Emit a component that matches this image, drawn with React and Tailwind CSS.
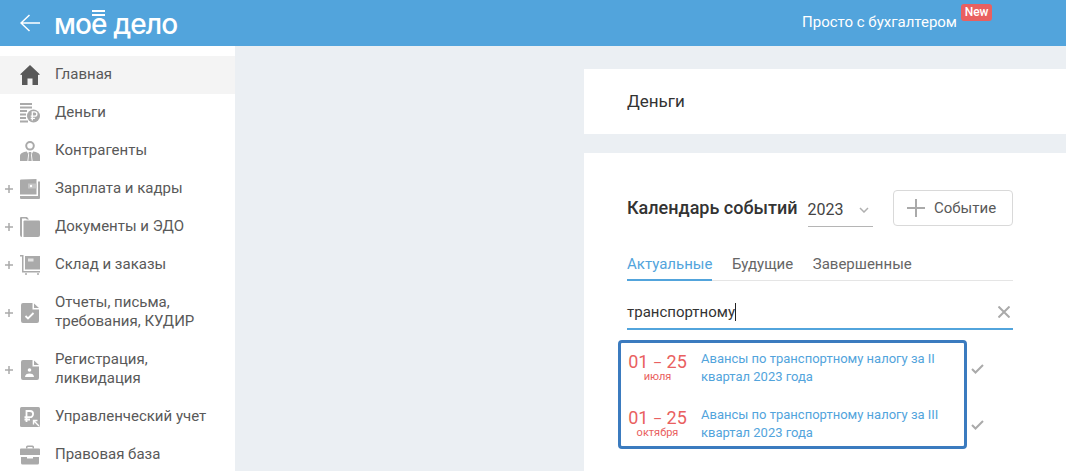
import React from 'react';

const Home = () => (
  <svg width="20" height="20" viewBox="0 0 20 20" fill="#595959">
    <path d="M10 0 L20 9.500 L18 10 V20 H12.500 V13.500 H7.500 V20 H2 V10 L0 9.500 Z" />
  </svg>
);
const Money = () => (
  <svg width="20" height="20" viewBox="0 0 20 20" fill="#aaa">
    <rect x="0" y="0" width="12" height="2" />
    <rect x="0" y="3.500" width="12" height="2" />
    <rect x="0" y="7" width="7" height="2" />
    <rect x="0" y="10.500" width="6" height="2" />
    <rect x="0" y="14" width="6" height="2" />
    <rect x="0" y="17.500" width="8" height="2" />
    <circle cx="13.500" cy="13" r="6.500" />
    <path d="M12.300 17.500V8.800h2.400a2.200 2.200 0 0 1 0 4.400h-4M10.700 15.300h4.200" fill="none" stroke="#fff" strokeWidth="1.300" />
  </svg>
);
const Person = () => (
  <svg width="20" height="20" viewBox="0 0 20 20" fill="#aaa">
    <path d="M10 0a4.800 4.800 0 1 1 0 9.600A4.800 4.800 0 0 1 10 0Zm0 2a2.800 2.800 0 1 0 0 5.600A2.800 2.800 0 0 0 10 2Z" />
    <path d="M0 20v-5C0 12.500 3 11 6.800 10.500l1.400 2.500-.8 7Zm20 0v-5c0-2.500-3-4-6.800-4.500l-1.400 2.500.8 7Z" />
    <path d="M8.800 11h2.400l.3 1.500-.5 1 .7 6.500H8.300l.7-6.500-.5-1Z" />
  </svg>
);
const Wallet = () => (
  <svg width="20" height="20" viewBox="0 0 20 20" fill="#aaa">
    <path d="M1 0.500 16.500 0v15.500H0V1.500a1 1 0 0 1 1-1Z" />
    <path d="M18 2.500h2V19a1 1 0 0 1-1 1H1a1 1 0 0 1-1-1V17h18Z" />
    <rect x="8" y="4.500" width="8.500" height="5" fill="#c4c4c4" />
    <circle cx="11" cy="7" r="1.200" fill="#fff" />
  </svg>
);
const Folder = () => (
  <svg width="20" height="20" viewBox="0 0 20 20" fill="#aaa">
    <path d="M0 1a1 1 0 0 1 1-1h6l2 2.500H7L5.500 1.500H2V20a2 2 0 0 1-2-2Z" />
    <path d="M3.500 4.500a1 1 0 0 1 1-1H19a1 1 0 0 1 1 1V18a2 2 0 0 1-2 2H3.500Z" />
  </svg>
);
const Stock = () => (
  <svg width="20" height="20" viewBox="0 0 20 20" fill="#aaa">
    <path d="M0 0h3.500v16H20v1.500H2V1.500H0Z" />
    <path d="M5 1h15v13.500H5Z" />
    <rect x="8" y="3.500" width="5.500" height="3" fill="#e4e4e4" />
    <circle cx="6" cy="19" r="1" />
    <circle cx="18" cy="19" r="1" />
  </svg>
);
const Report = () => (
  <svg width="18" height="20" viewBox="0 0 18 20" fill="#aaa">
    <path d="M2 0h9.500v6.500H18V18a2 2 0 0 1-2 2H2a2 2 0 0 1-2-2V2a2 2 0 0 1 2-2Z" />
    <path d="M13 0.500 18 5h-5Z" />
    <path d="M4.500 13l2.500 2.500L12.500 10" fill="none" stroke="#fff" strokeWidth="1.800" />
  </svg>
);
const Register = () => (
  <svg width="18" height="20" viewBox="0 0 18 20" fill="#aaa">
    <path d="M2 0h9.500v6.500H18V18a2 2 0 0 1-2 2H2a2 2 0 0 1-2-2V2a2 2 0 0 1 2-2Z" />
    <path d="M13 0.500 18 5h-5Z" />
    <circle cx="8.500" cy="10" r="1.800" fill="#fff" />
    <path d="M4 17c0-2.500 2-3.500 4.500-3.500S13 14.500 13 17Z" fill="#fff" />
  </svg>
);
const Mgmt = () => (
  <svg width="20" height="20" viewBox="0 0 20 20" fill="#aaa">
    <rect width="20" height="20" rx="1.500" />
    <path d="M6.500 15V4h3.500a3 3 0 0 1 0 6.200H4.500M4.500 12.500h5.500" fill="none" stroke="#fff" strokeWidth="1.800" />
    <path d="M19 19l-5-5M13.500 17.500v-4h4" fill="none" stroke="#fff" strokeWidth="1.400" />
  </svg>
);
const Case = () => (
  <svg width="20" height="20" viewBox="0 0 20 20" fill="#aaa">
    <path d="M6 3.500V2a1.500 1.500 0 0 1 1.500-1.500h5A1.500 1.500 0 0 1 14 2v1.500h-1.500V2h-5v1.500Z" />
    <path d="M1 3.500h18a1 1 0 0 1 1 1V10H0V4.500a1 1 0 0 1 1-1Z" />
    <path d="M1 12h6v1.500h6V12h6v6a1.500 1.500 0 0 1-1.500 1.500h-15A1.500 1.500 0 0 1 1 18Z" />
  </svg>
);

const menu = [
  { label: ['Главная'], icon: <Home />, active: true },
  { label: ['Деньги'], icon: <Money /> },
  { label: ['Контрагенты'], icon: <Person /> },
  { label: ['Зарплата и кадры'], icon: <Wallet />, plus: true },
  { label: ['Документы и ЭДО'], icon: <Folder />, plus: true },
  { label: ['Склад и заказы'], icon: <Stock />, plus: true },
  { label: ['Отчеты, письма,', 'требования, КУДИР'], icon: <Report />, plus: true },
  { label: ['Регистрация,', 'ликвидация'], icon: <Register />, plus: true },
  { label: ['Управленческий учет'], icon: <Mgmt /> },
  { label: ['Правовая база'], icon: <Case /> },
];

const events = [
  { month: 'июля', quarter: 'II' },
  { month: 'октября', quarter: 'III' },
];

function MenuRow({ item }) {
  const tall = item.label.length > 1;
  return (
    <div className={`relative flex items-center shrink-0 ${tall ? 'h-[57px]' : 'h-[38px]'} ${item.active ? 'bg-[#f4f4f4]' : ''}`}>
      {item.plus && (
        <svg className="absolute left-[5px] top-1/2 -translate-y-1/2" width="8" height="8" viewBox="0 0 8 8">
          <path d="M0 4h8M4 0v8" stroke="#aaa" strokeWidth="1.500" />
        </svg>
      )}
      <div className="w-[20px] ml-[20px] flex justify-center">{item.icon}</div>
      <div className="ml-[15px] pb-[2px] text-[15px] leading-[19px] text-[#595959]">
        {item.label.map((l) => <div key={l}>{l}</div>)}
      </div>
    </div>
  );
}

export default function App() {
  return (
    <div className="w-[1066px] h-[471px] overflow-hidden flex flex-col bg-[#ebeff3] font-['Roboto',sans-serif]">
      <header className="h-[46px] shrink-0 bg-[#52a4dc] flex items-center text-white">
        <svg className="ml-[20px]" width="20" height="18" viewBox="0 0 20 18" fill="none" stroke="#fff" strokeWidth="1.500">
          <path d="M20 9H1M9.500 1 1 9l8.500 8" />
        </svg>
        <div className="relative ml-[14px] mt-[1px] text-[28px] leading-[30px] font-medium font-['Inter',sans-serif] tracking-[-0.9px]">
          мое дело
          <span className="absolute left-[38px] top-[1px] w-[13px] h-[2px] bg-white" />
          <span className="absolute left-[38px] top-[5px] w-[13px] h-[2px] bg-white" />
        </div>
        <div className="ml-auto relative mr-[109px] pb-[2px] text-[15px] leading-[20px]">
          Просто с бухгалтером
          <span className="absolute left-[159px] top-[-8px] h-[17px] w-[31px] rounded-[3px] bg-[#e96060] text-[12px] leading-[16px] font-medium text-center">New</span>
        </div>
      </header>

      <div className="flex flex-1 min-h-0">
        <aside className="w-[235px] shrink-0 bg-white pt-[10px] flex flex-col">
          {menu.map((item) => <MenuRow key={item.label[0]} item={item} />)}
        </aside>

        <main className="ml-[349px] flex-1 pt-[23px] flex flex-col gap-[19px]">
          <section className="h-[65px] shrink-0 bg-white flex items-center pl-[43px] pt-[1px] text-[17px] text-[#333]">
            Деньги
          </section>

          <section className="flex-1 bg-white pl-[43px] pr-[53px] pt-[37px]">
            <div className="flex items-start">
              <div className="mt-[8px] text-[18px] leading-[20px] font-medium text-[#333]">Календарь событий</div>
              <div className="ml-[10px] w-[65px] h-[37px] border-b border-[#b5b5b5] flex items-center justify-between pr-[4px] pt-[4px] text-[16px] text-[#444]">
                2023
                <svg width="10" height="6" viewBox="0 0 10 6" fill="none" stroke="#b0b0b0" strokeWidth="1.500">
                  <path d="M1 1l4 4 4-4" />
                </svg>
              </div>
              <button className="ml-auto w-[120px] h-[36px] border border-[#d9d9d9] rounded-[4px] flex items-center pl-[13px] text-[15px] text-[#595959]">
                <svg width="18" height="18" viewBox="0 0 18 18" stroke="#aaa" strokeWidth="2">
                  <path d="M0 9h18M9 0v18" />
                </svg>
                <span className="ml-[9px]">Событие</span>
              </button>
            </div>

            <div className="mt-[17px] h-[37px] border-b border-[#e5e5e5] flex gap-[19.5px] text-[15px] leading-[40px] text-[#666]">
              <div className="text-[#52a4dc] h-[37px] border-b-2 border-[#52a4dc]">Актуальные</div>
              <div>Будущие</div>
              <div>Завершенные</div>
            </div>

            <div className="mt-[13px] h-[36px] border-b-2 border-[#52a4dc] flex items-center justify-between pr-[3px] pt-[2px] text-[15px] text-[#333]">
              <div className="flex items-center">
                транспортному
                <span className="w-px h-[18px] bg-[#222]" />
              </div>
              <svg width="12" height="12" viewBox="0 0 12 12" stroke="#aaa" strokeWidth="2">
                <path d="M0.500 0.500l11 11M11.500 0.500l-11 11" />
              </svg>
            </div>

            <div className="relative mt-[10px] -ml-[9px]">
              <div className="w-[349px] border-[3px] border-[#3b7bbf] rounded-[4px] flex flex-col gap-[20px] pt-[7px] pb-[4px]">
                {events.map((e) => (
                  <div key={e.month} className="h-[36px] flex items-start">
                    <div className="w-[73px] shrink-0 pt-[2px] flex flex-col items-center text-[#e96060]">
                      <div className="text-[18px] leading-[20px] whitespace-nowrap">01 <span className="text-[14px]">–</span> 25</div>
                      <div className="-mt-[3px] text-[11px] leading-[14px]">{e.month}</div>
                    </div>
                    <div className="ml-[7px] text-[13px] leading-[18px] text-[#52a4dc]">
                      Авансы по транспортному налогу за {e.quarter}<br />квартал 2023 года
                    </div>
                  </div>
                ))}
              </div>
              {[24, 80].map((top) => (
                <svg key={top} className="absolute left-[353px]" style={{ top }} width="13" height="10" viewBox="0 0 13 10" fill="none" stroke="#aaa" strokeWidth="2">
                  <path d="M1 5l3.500 3.500L12 1" />
                </svg>
              ))}
            </div>
          </section>
        </main>
      </div>
    </div>
  );
}
